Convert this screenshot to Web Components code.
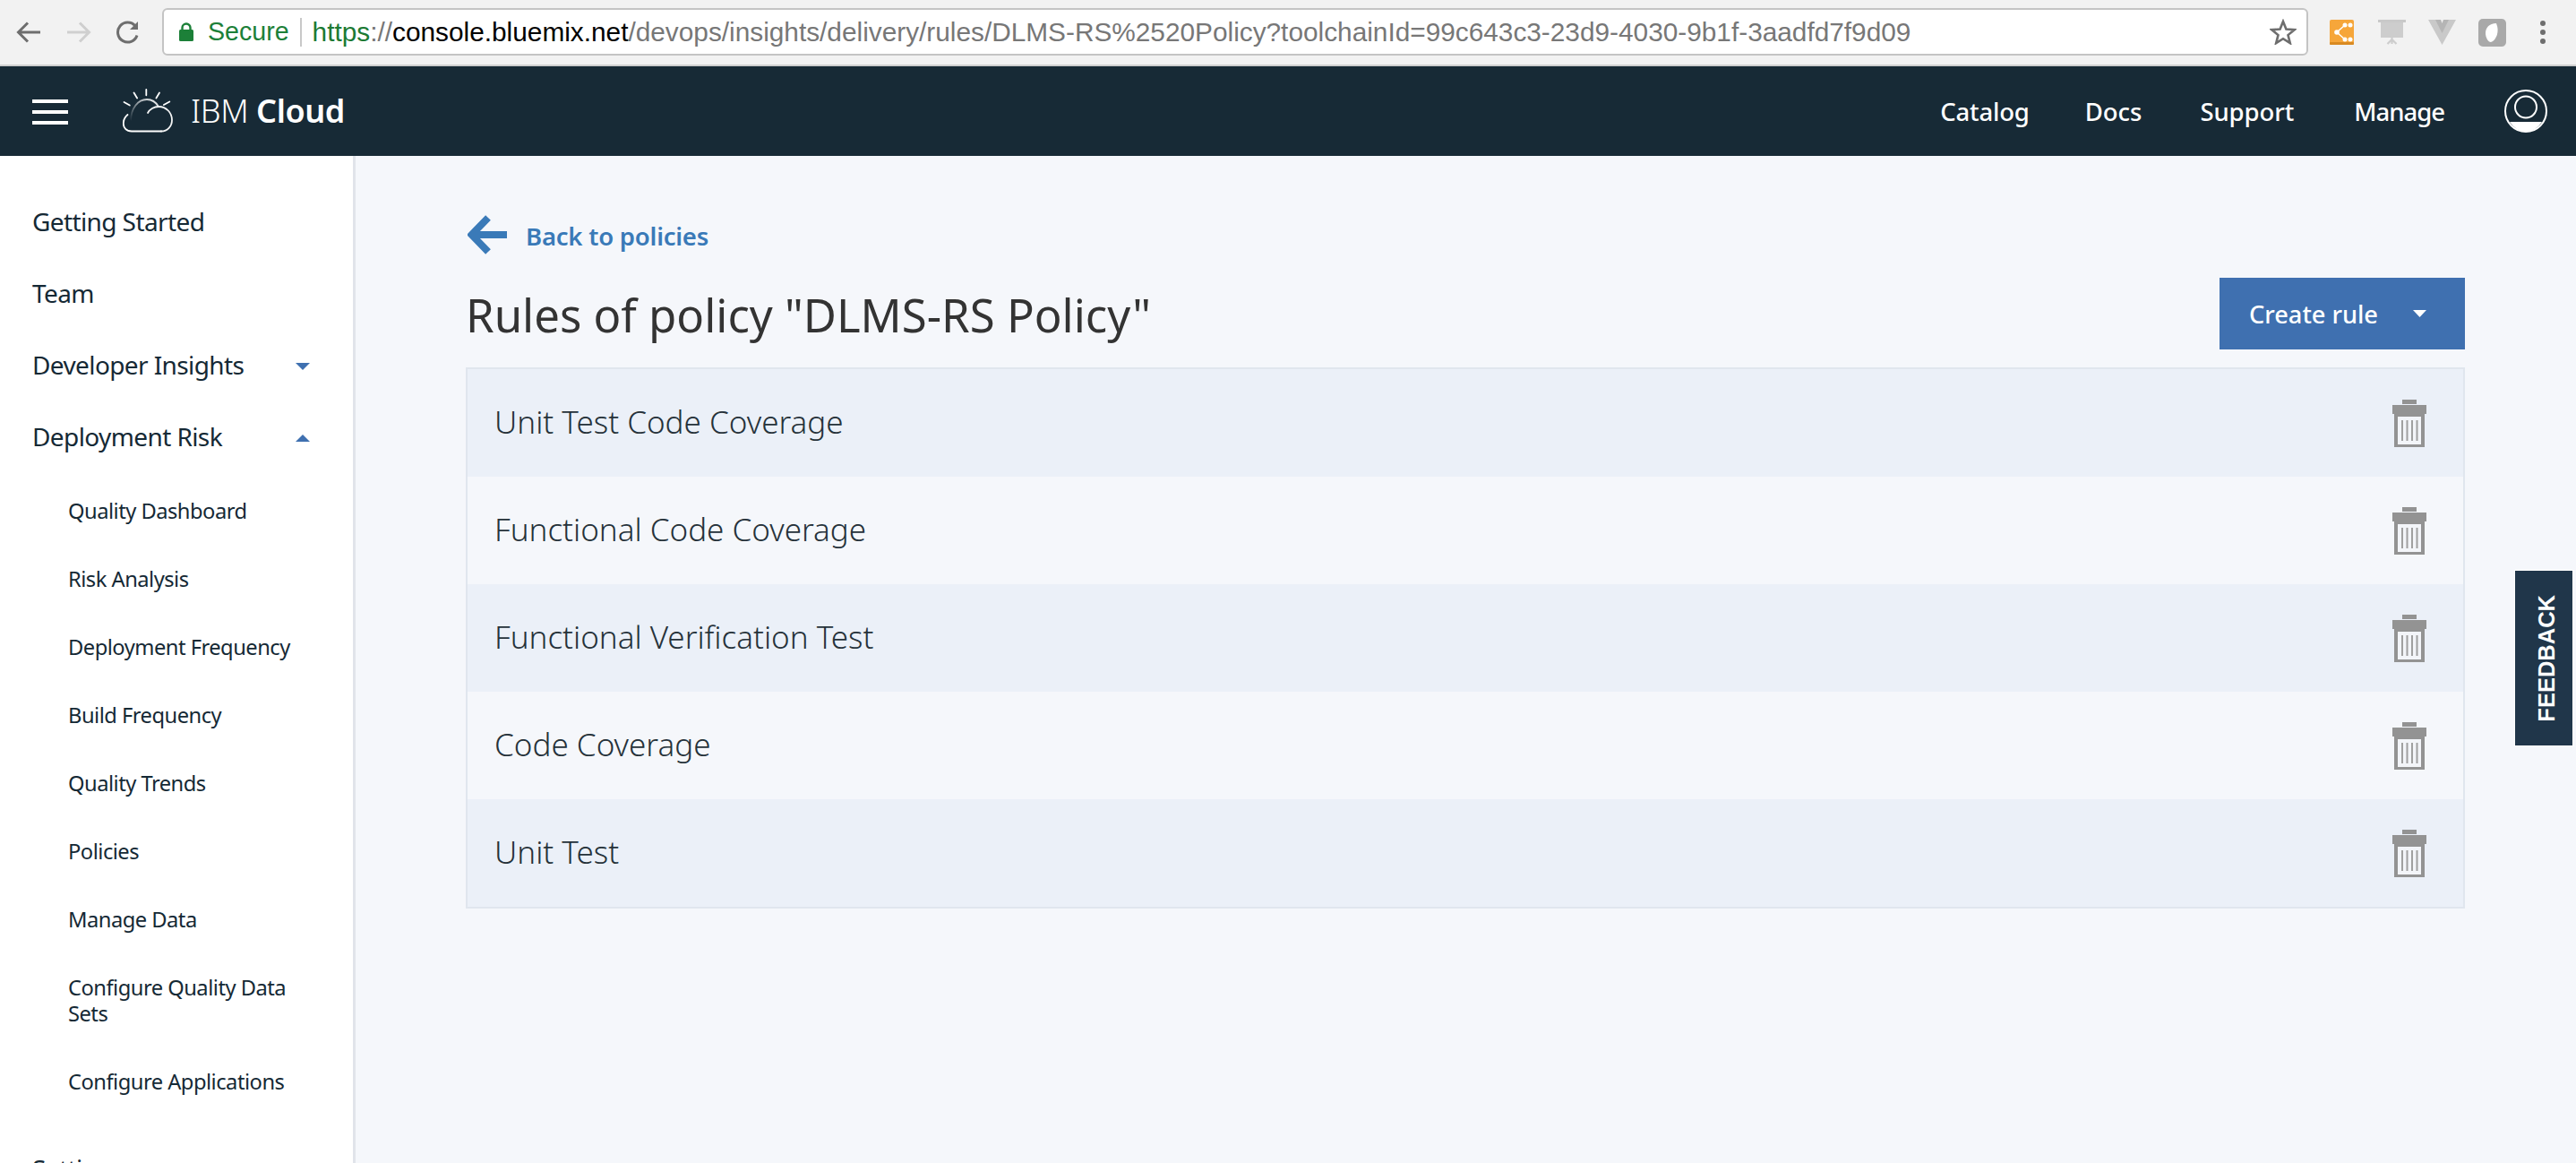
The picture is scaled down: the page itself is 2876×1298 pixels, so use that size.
<!DOCTYPE html>
<html><head><meta charset="utf-8"><title>Rules of policy</title>
<style>
html,body{margin:0;padding:0;height:100%;overflow:hidden;background:#f5f7fb;font-family:"Noto Sans",sans-serif}
</style></head>
<body>
<app-shell>
  <browser-bar></browser-bar>
  <ibm-nav></ibm-nav>
  <div style="display:flex;flex:1;min-height:0">
    <side-nav>
      <nav-item>Getting Started</nav-item>
      <nav-item>Team</nav-item>
      <nav-item caret="down">Developer Insights</nav-item>
      <nav-item caret="up">Deployment Risk</nav-item>
      <nav-item sub style="margin-top:5px">Quality Dashboard</nav-item>
      <nav-item sub>Risk Analysis</nav-item>
      <nav-item sub>Deployment Frequency</nav-item>
      <nav-item sub>Build Frequency</nav-item>
      <nav-item sub>Quality Trends</nav-item>
      <nav-item sub>Policies</nav-item>
      <nav-item sub>Manage Data</nav-item>
      <nav-item sub>Configure Quality Data Sets</nav-item>
      <nav-item sub>Configure Applications</nav-item>
      <nav-item style="margin-top:19px">Settings</nav-item>
    </side-nav>
    <rules-page>
      <back-link>Back to policies</back-link>
      <page-header>Rules of policy "DLMS-RS Policy"</page-header>
      <rule-list>
        <rule-row>Unit Test Code Coverage</rule-row>
        <rule-row>Functional Code Coverage</rule-row>
        <rule-row>Functional Verification Test</rule-row>
        <rule-row>Code Coverage</rule-row>
        <rule-row>Unit Test</rule-row>
      </rule-list>
    </rules-page>
  </div>
  <feedback-tab>FEEDBACK</feedback-tab>
</app-shell>
<script>
function def(name, html){
  customElements.define(name, class extends HTMLElement{
    constructor(){super();this.attachShadow({mode:'open'}).innerHTML=html;}
  });
}
def('app-shell',`<style>:host{display:flex;flex-direction:column;height:1298px;width:2876px;position:relative;overflow:hidden}</style><slot></slot>`);

def('browser-bar',`<style>
:host{display:flex;align-items:center;box-sizing:border-box;height:74px;background:#f2f2f2;border-bottom:2px solid #cfcfcf;flex:none;position:relative}
svg{display:block;flex:none}
.nav{margin-left:18px}
.url{margin-left:24px;width:2396px;height:53px;box-sizing:border-box;margin-top:-1px;background:#fff;border:2px solid #c4c4c4;border-radius:6px;display:flex;align-items:center;padding-left:17px;font:28.6px "Liberation Sans",sans-serif;white-space:nowrap;flex:none}
.sec{color:#1c8038;margin-left:16px}
.div{width:2px;height:32px;background:#c8c8c8;margin:0 12px 0 12px}
.addr{font-size:29.8px}
.g{color:#1c7a34}.k{color:#000}.m{color:#777}
.star{margin-left:auto;margin-right:11px}
.ext{display:flex;align-items:center}
</style>
<svg class="nav" width="28" height="26" viewBox="0 0 28 26" fill="none" stroke="#6e6e6e" stroke-width="3"><path d="M27 13H3M13 2.5 2.5 13 13 23.5"/></svg>
<svg class="nav" style="margin-left:28px" width="28" height="26" viewBox="0 0 28 26" fill="none" stroke="#cfcfcf" stroke-width="3"><path d="M1 13H25M15 2.5 25.5 13 15 23.5"/></svg>
<svg style="margin-left:27px" width="28" height="26" viewBox="0 0 28 26" fill="none" stroke="#6e6e6e" stroke-width="3"><path d="M24 16.5A11 11 0 1 1 22 6"/><path d="M25 1v9h-9" fill="#6e6e6e" stroke="none"/></svg>
<div class="url">
  <svg width="16" height="21" viewBox="0 0 16 21"><path d="M3.5 9V6a4.5 4.5 0 0 1 9 0v3" fill="none" stroke="#1c8038" stroke-width="2.4"/><rect y="8" width="16" height="13" rx="1.5" fill="#1c8038"/></svg>
  <span class="sec">Secure</span><span class="div"></span>
  <span class="addr"><span class="g">https</span><span class="m">://</span><span class="k">console.bluemix.net</span><span class="m">/devops/insights/delivery/rules/DLMS-RS%2520Policy?toolchainId=99c643c3-23d9-4030-9b1f-3aadfd7f9d09</span></span>
  <svg class="star" width="30" height="29" viewBox="0 0 30 29"><path d="M15 3l3.4 8.6 9.2.6-7.1 5.9 2.3 9L15 22.2 7.2 27.1l2.3-9-7.1-5.9 9.2-.6z" fill="none" stroke="#6e6e6e" stroke-width="2.6"/></svg>
</div>
<div class="ext" style="margin-left:24px">
  <svg width="27" height="28" viewBox="0 0 27 28"><rect width="27" height="28" rx="2" fill="#f6a63a"/><rect y="25" width="27" height="3" rx="1" fill="#d98a22"/><path d="M17 6 8 14l9 8" fill="none" stroke="#fff" stroke-width="1.5"/><g fill="#fff"><circle cx="17" cy="6" r="2.5"/><circle cx="23" cy="6" r="2.5"/><circle cx="8" cy="14" r="2.8"/><circle cx="17" cy="22" r="2.5"/><circle cx="23" cy="22" r="2.5"/></g></svg>
  <svg style="margin-left:27px" width="31" height="29" viewBox="0 0 31 29"><rect width="31" height="3" fill="#c9c9c9"/><rect x="3" y="3" width="25" height="17" fill="#cdcdcd"/><path d="M15.5 20v7M15.5 22l-5 5M15.5 22l5 5" stroke="#cdcdcd" stroke-width="2.2"/></svg>
  <svg style="margin-left:25px" width="31" height="28" viewBox="0 0 31 28"><path d="M0 0h10l5.500 11L21 0h10L15.500 28z" fill="#c9c9c9"/><path d="M8 0h6l1.500 4L17 0h6l-7.500 15z" fill="#b5b5b5"/></svg>
  <svg style="margin-left:25px" width="31" height="31" viewBox="0 0 31 31"><rect width="31" height="31" rx="5" fill="#a9a9a9"/><path d="M20 5c-8 0-12 5-12 11 0 5 3 10 6 10 6-2 10-12 6-21z" fill="#fff"/></svg>
  <svg style="margin-left:32px" width="18" height="26" viewBox="0 0 18 26" fill="#6e6e6e"><circle cx="9" cy="3" r="3"/><circle cx="9" cy="13" r="3"/><circle cx="9" cy="23" r="3"/></svg>
</div>`);

def('ibm-nav',`<style>
:host{display:flex;align-items:center;height:100px;background:#172a36;color:#fff;flex:none;position:relative}
svg{display:block;flex:none}
.brand{font-size:36px;margin:-2px 0 0 20px;letter-spacing:-.4px;white-space:nowrap;font-weight:300}
.brand b{font-weight:600}
.links{margin-left:auto;display:flex;align-items:center;font-size:27.5px;font-weight:500}
.links span{display:block}
</style>
<svg style="margin:2px 0 0 36px" width="40" height="28" viewBox="0 0 40 28" fill="#fff"><rect width="40" height="4"/><rect y="12" width="40" height="4"/><rect y="24" width="40" height="4"/></svg>
<svg style="margin-left:61px;margin-top:-2px" width="56" height="49" viewBox="0 0 56 49" fill="none" stroke="#fff" stroke-width="1.8" stroke-linecap="round">
<defs><linearGradient id="b" x1="0" y1="1" x2="1" y2="0"><stop offset="0" stop-color="#fff" stop-opacity="0"/><stop offset="1" stop-color="#fff"/></linearGradient></defs>
<path d="M26.300 1v6.300M12.500 4.500l3.600 6M41 4.500l-3.600 6M1.500 15l6.300 3.500M52.300 14.500l-6.400 3.500"/>
<path d="M43 47.500H10C4 47.500.6 43.500.8 38.500.9 35 2.500 31.500 5.500 29" />
<path d="M9 36C9 22 17 12 27 12c6 0 10 3 13 8" stroke="url(#b)"/>
<path d="M28 27c2-4 7-7 12-7 9 0 15 7 15 15 0 7-5 12.500-12 12.500" stroke="#fff" stroke-opacity=".95"/>
</svg>
<div class="brand">IBM <b>Cloud</b></div>
<div class="links">
  <span style="letter-spacing:-.2px">Catalog</span><span style="margin-left:62px;letter-spacing:0">Docs</span><span style="margin-left:65px;letter-spacing:-.1px">Support</span><span style="margin-left:67px;letter-spacing:-1px">Manage</span>
</div>
<svg style="margin:0 32px 0 67px" width="48" height="48" viewBox="0 0 48 48"><circle cx="24" cy="24" r="23" fill="none" stroke="#fff" stroke-width="2"/><circle cx="24" cy="19.500" r="12" fill="none" stroke="#fff" stroke-width="2"/><path d="M6 36h36A23 23 0 0 1 24 47 23 23 0 0 1 6 36z" fill="#fff"/></svg>`);

def('side-nav',`<style>:host{display:block;box-sizing:border-box;width:397px;flex:none;background:#fff;border-right:3px solid #e1e4ea;padding-top:33px;overflow:hidden;color:#152935}</style><slot></slot>`);

def('nav-item',`<style>
:host{display:flex;align-items:center;box-sizing:border-box;padding:25px 0 25px 36px;font-size:28px;line-height:30px;letter-spacing:-.6px;position:relative}
:host([sub]){padding:23.5px 60px 23.5px 76px;font-size:23.7px;line-height:29px;letter-spacing:-.5px}
svg{position:absolute;left:330px;top:50%;margin-top:-2px;display:none}
:host([caret]) svg{display:block}
:host([caret=up]) svg{transform:rotate(180deg)}
</style><span><slot></slot></span><svg width="16" height="8" viewBox="0 0 16 8"><path d="M0 0h16L8 8z" fill="#3f70b0"/></svg>`);

def('rules-page',`<style>:host{display:block;flex:1;min-width:0;box-sizing:border-box;padding:66px 124px 0 123px;background:#f5f7fb}</style><slot></slot>`);

def('back-link',`<style>
:host{display:flex;align-items:center;height:44px;color:#3a7ab8;font-size:27.500px;font-weight:600;margin-left:2px;letter-spacing:-.22px}
svg{display:block;margin-right:21px}
span{position:relative;top:1px}
</style><svg width="44" height="44" viewBox="0 0 44 44"><path d="M44 22H6M23 3 4.500 22 23 41" fill="none" stroke="#3a7ab8" stroke-width="8"/></svg><span><slot></slot></span>`);

def('page-header',`<style>
:host{display:flex;justify-content:space-between;align-items:center;margin-top:26px;height:80px}
h1{margin:0;font-size:50.9px;font-weight:400;color:#333;white-space:nowrap;position:relative;top:1px}
button{all:unset;box-sizing:border-box;width:274px;height:80px;background:#3f70b0;color:#fff;font:500 27.2px "Noto Sans",sans-serif;display:flex;align-items:center;padding-left:33px}
svg{margin-left:39px}
</style><h1><slot></slot></h1><button>Create rule<svg width="15" height="8" viewBox="0 0 15 8"><path d="M0 0h15L7.500 8z" fill="#fff"/></svg></button>`);

def('rule-list',`<style>:host{display:block;margin-top:20px;border:2px solid #e0e6ee}
</style><slot></slot>`);

def('rule-row',`<style>
:host{display:flex;align-items:center;justify-content:space-between;height:120px;padding:0 41px 0 30px;font-size:35px;font-weight:300;color:#26323a;background:#f5f7fb}
:host(:nth-child(odd)){background:#ebf0f8}
span{position:relative;top:-2px}
svg{display:block}
</style><span><slot></slot></span><svg width="38" height="53" viewBox="0 0 38 53"><rect x="11" y="0" width="16" height="5" fill="#939393"/><rect x="0" y="6" width="38" height="10" fill="#939393"/><rect x="2" y="16" width="34" height="37" fill="#939393"/><rect x="6" y="19" width="26" height="31" fill="#f3f5f9"/><g fill="#a0a0a0"><rect x="10" y="23" width="2" height="23"/><rect x="15.500" y="23" width="2" height="23"/><rect x="21" y="23" width="2" height="23"/><rect x="26.500" y="23" width="2" height="23"/></g></svg>`);

def('feedback-tab',`<style>
:host{position:absolute;left:2807px;top:636px;width:67px;height:197px;box-sizing:border-box;background:#20364a;border:1px solid #fff;border-right-width:2px;color:#fff;display:flex;align-items:center;justify-content:center;writing-mode:vertical-rl;font:bold 25.500px "Liberation Sans",sans-serif}
span{transform:rotate(180deg);position:relative;left:3px}
</style><span><slot></slot></span>`);
</script>
</body></html>
